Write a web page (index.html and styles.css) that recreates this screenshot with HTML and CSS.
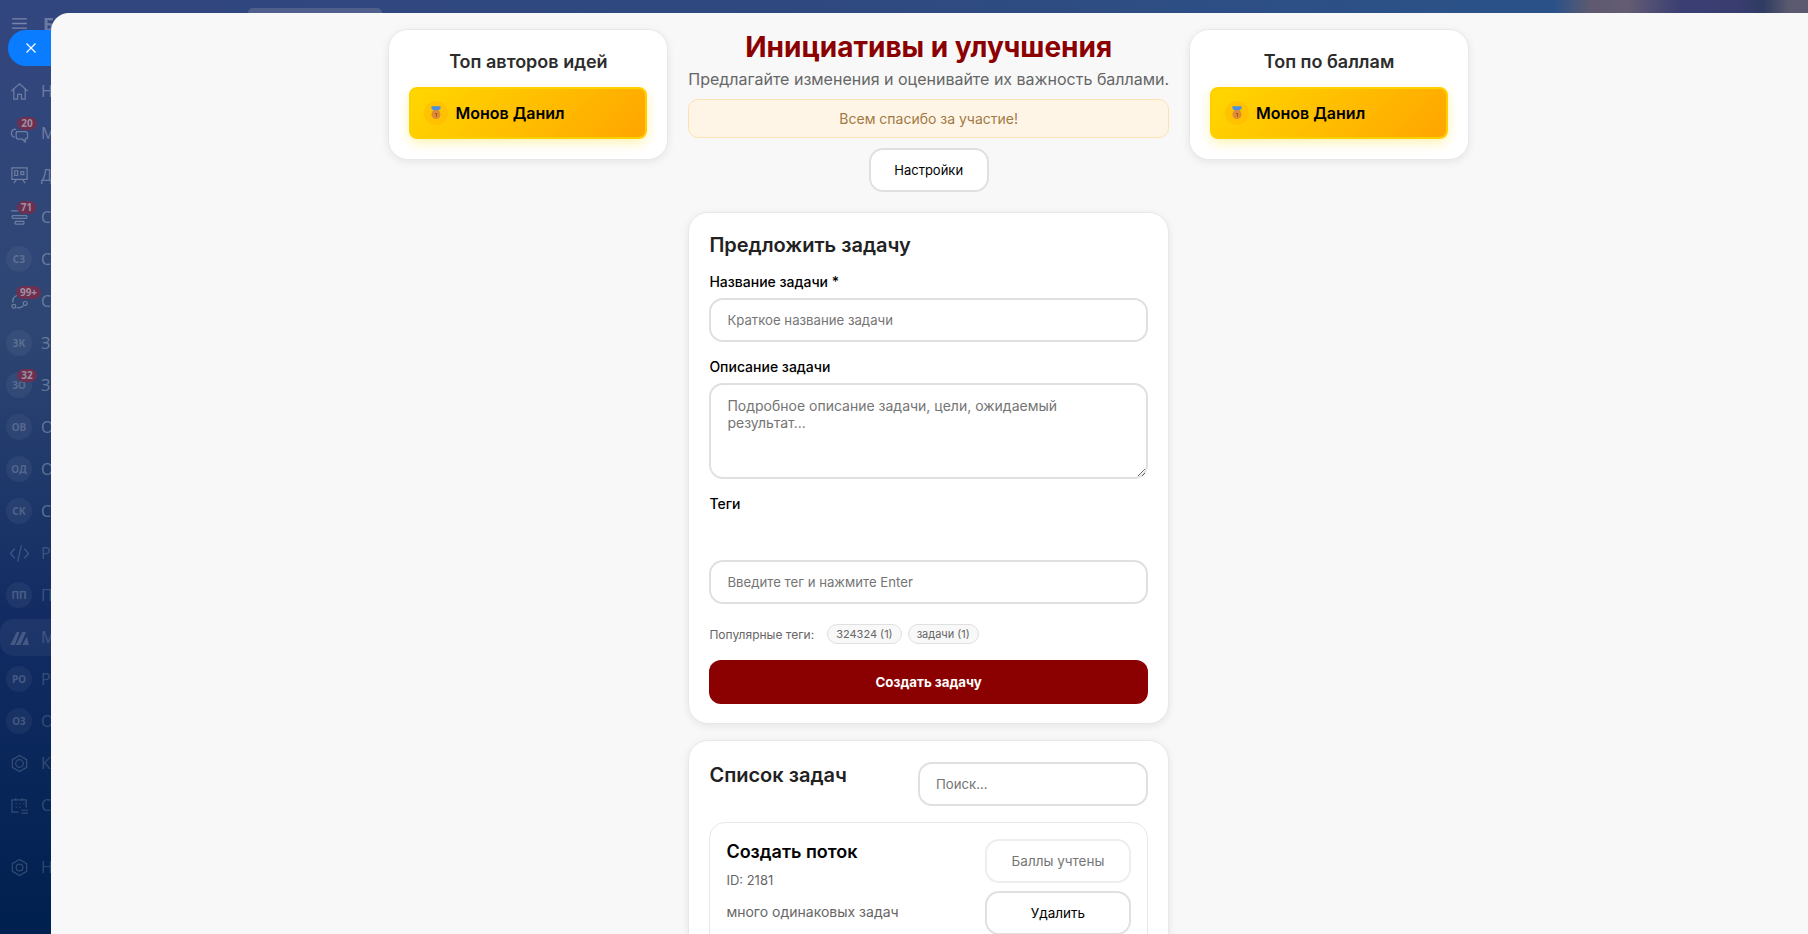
FILE: index.html
```html
<!DOCTYPE html>
<html lang="ru">
<head>
    <meta charset="UTF-8">
    <meta name="viewport" content="width=device-width, initial-scale=1.0">
    <title>Инициативы и улучшения</title>
    <link rel="stylesheet" href="styles.css">
</head>
<body>
    <div class="topbar">
        <div class="topbar-left"><div class="top-search"></div></div>
    </div>

    <!-- dimmed portal menu behind the slider -->
    <nav class="sidebar">
        <div class="menu-head">
            <svg class="burger" viewBox="0 0 16 12"><path d="M0 1h16M0 6h16M0 11h16"/></svg>
            <span class="menu-brand">Битрикс24</span>
        </div>
        <div class="menu-list">
            <div class="menu-item">
                <span class="menu-icon"><svg viewBox="0 0 20 20"><path d="M1.500 9.500 10 2l8.500 7.500M4 8v10h4v-5h4v5h4V8"/></svg></span>
                <span class="menu-text">Новости</span>
            </div>
            <div class="menu-item">
                <span class="menu-icon"><svg viewBox="0 0 20 20"><path d="M5 14c-2-.5-3.500-1.500-3.500-4 0-3 2-4.500 5-4.500M7 8h9c1.500 0 2.500 1 2.500 2.500v3c0 1.500-1 2.500-2.500 2.500v3l-3-3H9c-1.500 0-2.500-1-2.500-2.500V10C6.500 9 7 8 7 8z"/></svg></span>
                <span class="badge">20</span>
                <span class="menu-text">Мессенджер</span>
            </div>
            <div class="menu-item">
                <span class="menu-icon"><svg viewBox="0 0 20 20"><path d="M2 2h16v12H2zM7 14l-3 4M13 14l3 4M10 14v1M5 5h3v5H5zM11.500 6h3v3h-3z"/></svg></span>
                <span class="menu-text">Доски</span>
            </div>
            <div class="menu-item">
                <span class="menu-icon"><svg viewBox="0 0 20 20"><path d="M1 3h12M3 8h14c1 0 1 3 0 3H3c-1 0-1-3 0-3zM6 14h8c1 0 1 3 0 3H6c-1 0-1-3 0-3z"/></svg></span>
                <span class="badge badge-71">71</span>
                <span class="menu-text">CRM</span>
            </div>
            <div class="menu-item">
                <span class="avatar">СЗ</span>
                <span class="menu-text">Сделки</span>
            </div>
            <div class="menu-item">
                <span class="menu-icon"><svg viewBox="0 0 20 20"><circle cx="4" cy="15" r="2"/><circle cx="16" cy="12" r="2"/><path d="M3 11C2 6 6 3 11 3M7 16.500c3 .5 5 0 7-2"/></svg></span>
                <span class="badge badge-99">99+</span>
                <span class="menu-text">Сотрудники</span>
            </div>
            <div class="menu-item">
                <span class="avatar">ЗК</span>
                <span class="menu-text">Заявки</span>
            </div>
            <div class="menu-item">
                <span class="avatar">ЗО</span>
                <span class="badge">32</span>
                <span class="menu-text">Задачи</span>
            </div>
            <div class="menu-item">
                <span class="avatar">ОВ</span>
                <span class="menu-text">Отчеты</span>
            </div>
            <div class="menu-item">
                <span class="avatar">ОД</span>
                <span class="menu-text">Отделы</span>
            </div>
            <div class="menu-item">
                <span class="avatar">СК</span>
                <span class="menu-text">Склад</span>
            </div>
            <div class="menu-item">
                <span class="menu-icon"><svg viewBox="0 0 20 20"><path d="M5 5l-4.500 5L5 15M15 5l4.500 5L15 15M12 1.500 8 18.500"/></svg></span>
                <span class="menu-text">Разработка</span>
            </div>
            <div class="menu-item">
                <span class="avatar">ПП</span>
                <span class="menu-text">Проекты</span>
            </div>
            <div class="menu-item menu-item-active">
                <span class="menu-icon"><svg class="logo-mark" viewBox="0 0 20 16"><path d="M0 16 7 2h3L5 16zM6 16 13 2h4l-6 14zM13 16l5-9 2 9z"/></svg></span>
                <span class="menu-text">Маркет</span>
            </div>
            <div class="menu-item">
                <span class="avatar">РО</span>
                <span class="menu-text">Ресурсы</span>
            </div>
            <div class="menu-item">
                <span class="avatar">ОЗ</span>
                <span class="menu-text">Оценка</span>
            </div>
            <div class="menu-item">
                <span class="menu-icon"><svg viewBox="0 0 20 20"><path d="M10 1.500 17.500 6v8L10 18.500 2.500 14V6z"/><circle cx="10" cy="10" r="4"/></svg></span>
                <span class="menu-text">Компания</span>
            </div>
            <div class="menu-item">
                <span class="menu-icon"><svg viewBox="0 0 20 20"><path d="M9 17H2V4h15v8M6 2v3M13 2v3M6 8h1M10 8h1M14 8h1M6 12h1M10 12h1M12 15h7M12 18h7"/></svg></span>
                <span class="menu-text">События</span>
            </div>
            <div class="menu-item menu-item-bottom">
                <span class="menu-icon"><svg viewBox="0 0 20 20"><path d="M10 1.500 17.500 6v8L10 18.500 2.500 14V6z"/><circle cx="10" cy="10" r="3.500"/></svg></span>
                <span class="menu-text">Настройки</span>
            </div>
        </div>
    </nav>

    <button class="close-tab">
        <svg viewBox="0 0 10 10"><path d="M.5.500l9 9M9.500.500l-9 9"/></svg>
    </button>

    <main class="slider">
        <div class="page">
            <aside class="top-card">
                <h3>Топ авторов идей</h3>
                <div class="leader">
                    <span class="medal">
                        <svg viewBox="0 0 16 18"><path class="medal-ribbon" d="M2 0h12v3l-4 4H6L2 3z"/><circle class="medal-body" cx="8" cy="11" r="6"/><path class="medal-num" d="M7 9h2v5H8v-4H7z"/></svg>
                    </span>
                    <span>Монов Данил</span>
                </div>
            </aside>

            <div class="center">
                <h1>Инициативы и улучшения</h1>
                <p class="subtitle">Предлагайте изменения и оценивайте их важность баллами.</p>
                <div class="notice">Всем спасибо за участие!</div>
                <button class="btn btn-settings">Настройки</button>

                <section class="card form-card">
                    <h2>Предложить задачу</h2>
                    <div class="form-group">
                        <label>Название задачи *</label>
                        <input type="text" class="form-input" placeholder="Краткое название задачи">
                    </div>
                    <div class="form-group">
                        <label>Описание задачи</label>
                        <textarea class="form-input form-textarea" placeholder="Подробное описание задачи, цели, ожидаемый результат..."></textarea>
                    </div>
                    <div class="form-group">
                        <label>Теги</label>
                        <div class="tag-slot"></div>
                        <input type="text" class="form-input" placeholder="Введите тег и нажмите Enter">
                    </div>
                    <div class="popular-tags">
                        <span class="popular-label">Популярные теги:</span>
                        <span class="tag">324324 (1)</span>
                        <span class="tag">задачи (1)</span>
                    </div>
                    <button class="btn-primary">Создать задачу</button>
                </section>

                <section class="card list-card">
                    <div class="list-header">
                        <h2>Список задач</h2>
                        <input type="text" class="form-input search-input" placeholder="Поиск...">
                    </div>
                    <div class="task">
                        <div class="task-info">
                            <h4>Создать поток</h4>
                            <div class="task-id">ID: 2181</div>
                            <p>много одинаковых задач</p>
                        </div>
                        <div class="task-actions">
                            <button class="btn btn-muted">Баллы учтены</button>
                            <button class="btn">Удалить</button>
                        </div>
                    </div>
                </section>
            </div>

            <aside class="top-card">
                <h3>Топ по баллам</h3>
                <div class="leader">
                    <span class="medal">
                        <svg viewBox="0 0 16 18"><path class="medal-ribbon" d="M2 0h12v3l-4 4H6L2 3z"/><circle class="medal-body" cx="8" cy="11" r="6"/><path class="medal-num" d="M7 9h2v5H8v-4H7z"/></svg>
                    </span>
                    <span>Монов Данил</span>
                </div>
            </aside>
        </div>
    </main>
</body>
</html>
```

FILE: styles.css
```css
* {
    box-sizing: border-box;
}

html,
body {
    height: 100%;
}

body {
    margin: 0;
    overflow: hidden;
    font-family: Inter, 'Noto Sans', sans-serif;
    color: #000;
    background: linear-gradient(180deg, #33467f 0%, #2d4673 35%, #122c63 66%, #00204f 100%);
}

/* portal behind the slider */
.topbar {
    position: absolute;
    top: 0;
    left: 0;
    right: 0;
    height: 13px;
    background: linear-gradient(90deg, #31457f 0%, #2f4a80 50%, #2b5288 82%, #2b5288 86%, #5f5a70 88%, #635c72 90%, #3a3e72 93%, #393d70 96%, #2f3c62 97.500%, #5c5a70 99%);
}

.topbar-left {
    width: 226px;
    height: 13px;
    background: #31457f;
}

.top-search {
    position: absolute;
    left: 248px;
    top: 8px;
    width: 134px;
    height: 5px;
    border-radius: 6px 6px 0 0;
    background: #505f8c;
}

.sidebar {
    width: 226px;
    height: 100%;
    padding-top: 16px;
    color: rgba(255, 255, 255, 0.3);
}

.menu-head {
    display: flex;
    align-items: center;
    gap: 16px;
    height: 15px;
    padding-left: 12px;
}

.burger {
    width: 15px;
    height: 11px;
    fill: none;
    stroke: rgba(255, 255, 255, 0.35);
    stroke-width: 1.500;
}

.menu-brand {
    font-size: 18px;
    font-weight: 700;
    font-family: 'Open Sans', sans-serif;
}

.menu-list {
    display: flex;
    flex-direction: column;
    padding-top: 39px;
}

.menu-item {
    position: relative;
    display: flex;
    align-items: center;
    gap: 9px;
    height: 42px;
    padding-left: 6px;
    font-family: 'Open Sans', sans-serif;
    font-size: 16px;
}

.menu-item-active {
    background: rgba(255, 255, 255, 0.05);
    border-radius: 14px;
    height: 37px;
    margin: 2.500px 0;
}

.menu-item-bottom {
    margin-top: 20px;
    color: rgba(255, 255, 255, 0.1);
}

.menu-item:nth-child(n+12) {
    color: rgba(255, 255, 255, 0.18);
}

.menu-icon,
.avatar {
    flex: none;
    display: flex;
    align-items: center;
    justify-content: center;
    width: 26px;
    height: 26px;
}

.menu-icon svg {
    width: 19px;
    height: 19px;
    fill: none;
    stroke: currentColor;
    stroke-width: 1.300;
}

.menu-icon .logo-mark {
    width: 19px;
    height: 15px;
    fill: currentColor;
    stroke: none;
}

.avatar {
    border-radius: 50%;
    background: rgba(255, 255, 255, 0.05);
    color: rgba(255, 255, 255, 0.2);
    font-family: 'Noto Sans', sans-serif;
    font-size: 10px;
    font-weight: 700;
}

.badge {
    position: absolute;
    left: 17px;
    top: 5px;
    height: 13px;
    min-width: 20px;
    padding: 0 3px;
    border-radius: 7px;
    background: #6e3050;
    color: #a08fa2;
    font-size: 10px;
    font-weight: 700;
    line-height: 13px;
    text-align: center;
}

.badge-71 {
    min-width: 19px;
}

.badge-99 {
    left: 16px;
    top: 6px;
    min-width: 25px;
}

.close-tab {
    position: absolute;
    left: 8px;
    top: 30px;
    width: 60px;
    height: 36px;
    padding: 0 0 0 18px;
    border: none;
    border-radius: 18px 0 0 18px;
    background: #0a7cff;
    text-align: left;
}

.close-tab svg {
    display: block;
    width: 10px;
    height: 10px;
    fill: none;
    stroke: #fff;
    stroke-width: 1.200;
}

/* slider with the actual page */
.slider {
    position: absolute;
    left: 51px;
    right: 0;
    top: 13px;
    bottom: 0;
    overflow: hidden;
    background: #f8f8f8;
    border-radius: 18px 0 0 0;
}

.page {
    display: grid;
    grid-template-columns: 280px 480.600px 280px;
    gap: 20px;
    align-items: start;
    padding: 16px 0 0 337.400px;
}

.top-card {
    height: 131px;
    padding: 21px 20px 20px;
    background: #fff;
    border: 1px solid #e8e8e8;
    border-radius: 20px;
    box-shadow: 0 2px 8px rgba(0, 0, 0, 0.08);
}

.top-card h3 {
    margin: 0 0 14px 0;
    font-size: 18px;
    font-weight: 600;
    line-height: 22px;
    text-align: center;
    color: #2c2c2c;
}

.leader {
    display: flex;
    align-items: center;
    gap: 7px;
    height: 52px;
    padding: 0 13px;
    border: 2px solid #ffd000;
    border-radius: 8px;
    background: linear-gradient(135deg, #ffd700, #ffa500);
    box-shadow: 0 4px 12px rgba(255, 215, 0, 0.3);
    font-size: 16px;
    font-weight: 600;
}

.medal {
    display: flex;
    align-items: center;
    justify-content: center;
    width: 24px;
    height: 24px;
    border-radius: 50%;
    background: rgba(255, 165, 0, 0.3);
}

.medal svg {
    width: 12px;
    height: 14px;
}

.medal-ribbon {
    fill: #4a8fe0;
}

.medal-body {
    fill: #e08a35;
}

.medal-num {
    fill: #7a4a1c;
}

.center {
    display: flex;
    flex-direction: column;
    align-items: center;
    padding-top: 1px;
}

h1 {
    margin: 0;
    font-size: 28px;
    font-weight: 700;
    line-height: 34px;
    color: #8b0000;
    text-align: center;
}

.subtitle {
    margin: 5px 0 0 0;
    font-size: 16px;
    line-height: 20px;
    color: #666;
    white-space: nowrap;
}

.notice {
    width: 100%;
    height: 39px;
    margin-top: 10px;
    background: #fff5e6;
    border: 1px solid #ffe0b2;
    border-radius: 10px;
    font-size: 14px;
    line-height: 37px;
    text-align: center;
    color: #a07a45;
}

.btn {
    height: 44px;
    background: #fff;
    border: 2px solid #e0e0e0;
    border-radius: 14px;
    font-family: inherit;
    font-size: 13.500px;
    color: #000;
    cursor: pointer;
}

.btn-settings {
    width: 120px;
    margin-top: 10px;
    font-size: 13px;
}

.card {
    width: 100%;
    padding: 20px;
    background: #fff;
    border: 1px solid #e8e8e8;
    border-radius: 20px;
    box-shadow: 0 2px 8px rgba(0, 0, 0, 0.08);
}

.form-card {
    height: 512px;
    margin-top: 20px;
}

.list-card {
    margin-top: 16px;
}

.card h2 {
    margin: 0;
    font-size: 20px;
    font-weight: 600;
    line-height: 24px;
    color: #222;
}

.form-group {
    margin-top: 16px;
}

label {
    display: block;
    margin-bottom: 7px;
    font-size: 14px;
    font-weight: 500;
    line-height: 18px;
}

.form-input {
    display: block;
    width: 100%;
    height: 44px;
    padding: 0 16px;
    background: #fff;
    border: 2px solid #e0e0e0;
    border-radius: 14px;
    font-family: inherit;
    font-size: 13.200px;
    color: #000;
    outline: none;
}

.form-input::placeholder {
    color: #757575;
}

.form-textarea {
    height: 96px;
    padding: 12px 16px;
    font-size: 14px;
    line-height: 17px;
    resize: vertical;
}

.tag-slot {
    height: 40px;
}

.popular-tags {
    display: flex;
    align-items: center;
    height: 20px;
    margin-top: 20px;
    font-size: 12px;
}

.popular-label {
    margin-right: 13px;
    color: #666;
}

.tag {
    height: 20px;
    margin-right: 6px;
    padding: 0 8px;
    background: #f8f8f8;
    border: 1px solid #e0e0e0;
    border-radius: 10px;
    font-size: 11px;
    line-height: 18px;
    color: #666;
}

.btn-primary {
    display: block;
    width: 100%;
    height: 44px;
    margin-top: 16px;
    background: #8b0000;
    border: none;
    border-radius: 12px;
    font-family: inherit;
    font-size: 13.300px;
    font-weight: 700;
    color: #fff;
    cursor: pointer;
}

.list-header {
    display: flex;
    justify-content: space-between;
    align-items: flex-start;
}

.list-header h2 {
    margin-top: 2px;
}

.search-input {
    width: 230px;
    margin-top: 1px;
}

.task {
    display: flex;
    justify-content: space-between;
    margin-top: 16px;
    padding: 16px;
    background: #fff;
    border: 1px solid #e8e8e8;
    border-radius: 16px;
}

.task h4 {
    margin: 0;
    font-size: 18px;
    font-weight: 600;
    line-height: 26px;
}

.task-id {
    margin-top: 7px;
    font-size: 13px;
    line-height: 16px;
    color: #666;
}

.task p {
    margin: 15px 0 0 0;
    font-size: 14px;
    line-height: 17px;
    color: #666;
}

.task-actions {
    display: flex;
    flex-direction: column;
    gap: 8px;
    width: 146px;
}

.btn-muted {
    border-color: #eee;
    color: #757575;
}
```
